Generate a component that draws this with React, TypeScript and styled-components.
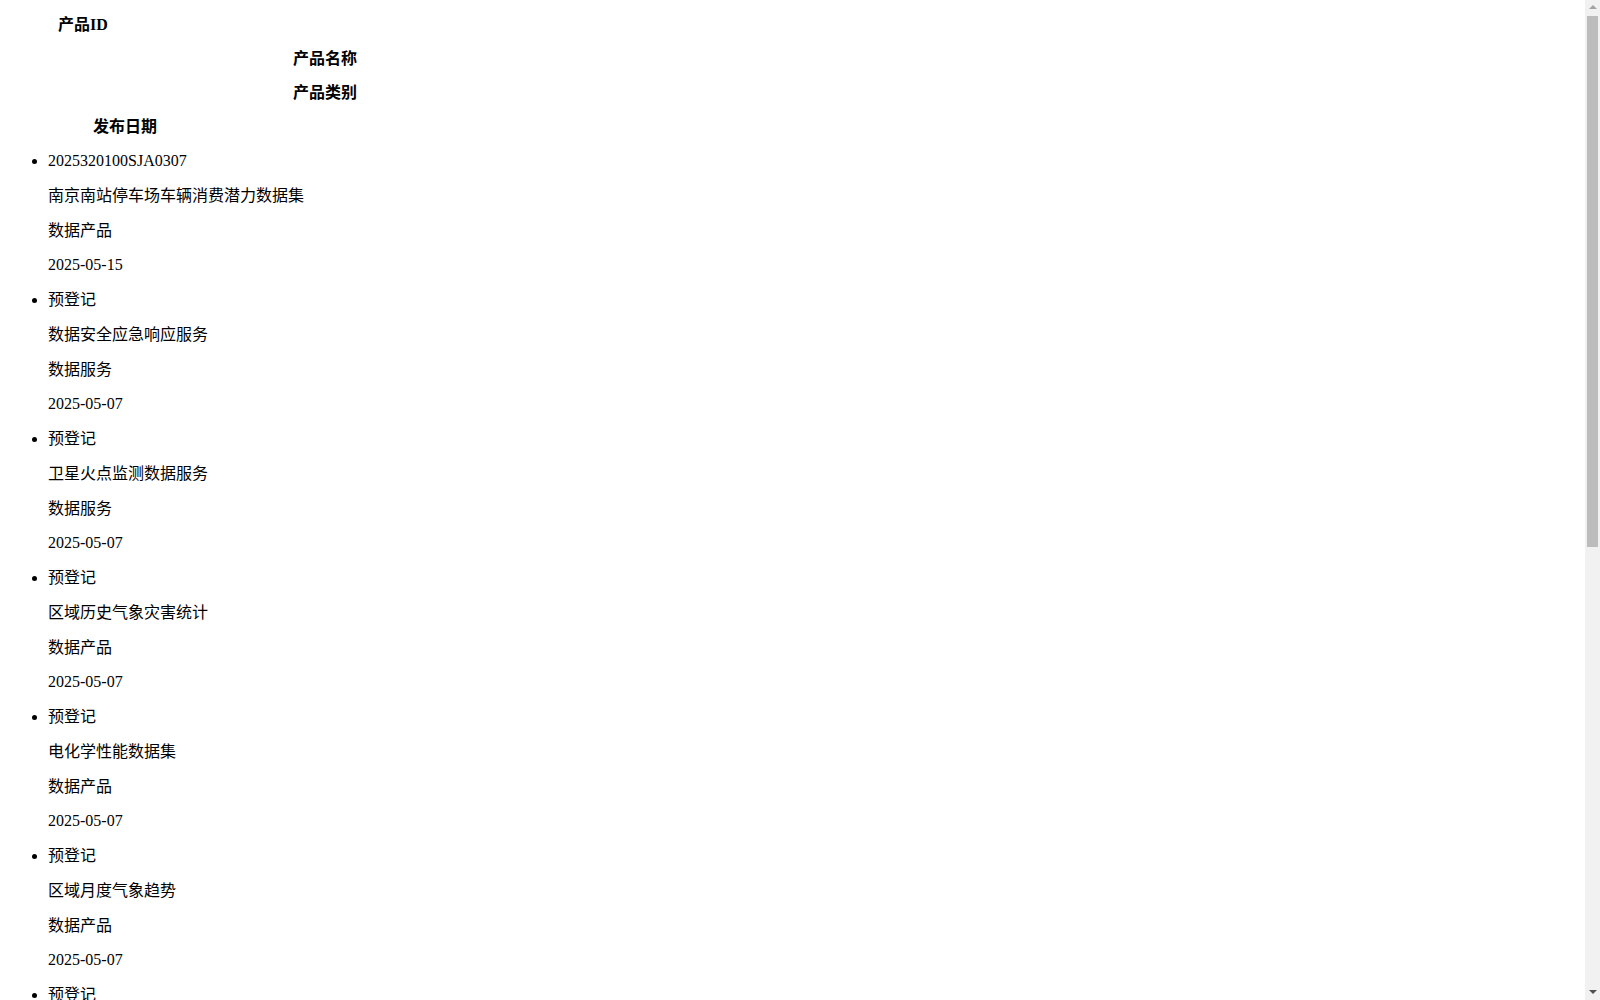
import React from "react";
import styled, { createGlobalStyle } from "styled-components";

const Global = createGlobalStyle`
  html {
    background: #fff;
  }
  body {
    margin: 0;
    padding: 0 23px 8px 8px;
    font-family: "Liberation Serif", "Noto Sans CJK SC", serif;
    font-size: 16px;
    color: #000;
  }
`;

const Header = styled.div`
  display: flow-root;
  padding-top: 16px;
`;

const HeaderCell = styled.div<{ $width: number }>`
  width: ${(p) => p.$width}px;
  margin: 16px 0;
  line-height: 18px;
  font-weight: bold;
  text-align: center;

  &:first-child {
    margin-top: 0;
  }
  &:last-child {
    margin-bottom: 0;
  }
`;

const List = styled.ul`
  margin: 16px 0;
  padding-left: 40px;
  list-style: disc;
`;

const Item = styled.li`
  line-height: 18.75px;
`;

const Line = styled.p`
  margin: 16px 0;
  line-height: 18.75px;
`;

/* Classic page scrollbar drawn over the right edge of the window */
const ScrollRail = styled.div`
  position: fixed;
  top: 0;
  right: 0;
  bottom: 0;
  width: 15px;
  background: #f1f1f1;
  display: flex;
  flex-direction: column;
`;

const ScrollButton = styled.div<{ $dir: "up" | "down" }>`
  height: 15px;
  flex: none;
  display: flex;
  justify-content: center;
  align-items: ${(p) => (p.$dir === "up" ? "flex-start" : "flex-start")};
  padding-top: 5px;
  box-sizing: border-box;

  &::before {
    content: "";
    width: 0;
    height: 0;
    border-left: 4px solid transparent;
    border-right: 4px solid transparent;
    ${(p) =>
      p.$dir === "up"
        ? "border-bottom: 4px solid #a3a3a3;"
        : "border-top: 4px solid #505050;"}
  }
`;

const ScrollTrack = styled.div`
  flex: 1;
  padding: 1px 2px 0;
`;

const ScrollThumb = styled.div`
  height: 531px;
  background: #bcbcbc;
`;

type Row = { id: string; name: string; kind: string; date: string };

const rows: Row[] = [
  { id: "2025320100SJA0307", name: "南京南站停车场车辆消费潜力数据集", kind: "数据产品", date: "2025-05-15" },
  { id: "预登记", name: "数据安全应急响应服务", kind: "数据服务", date: "2025-05-07" },
  { id: "预登记", name: "卫星火点监测数据服务", kind: "数据服务", date: "2025-05-07" },
  { id: "预登记", name: "区域历史气象灾害统计", kind: "数据产品", date: "2025-05-07" },
  { id: "预登记", name: "电化学性能数据集", kind: "数据产品", date: "2025-05-07" },
  { id: "预登记", name: "区域月度气象趋势", kind: "数据产品", date: "2025-05-07" },
  { id: "预登记", name: "城市道路交通流量数据集", kind: "数据产品", date: "2025-05-06" },
  { id: "预登记", name: "企业用电行为分析服务", kind: "数据服务", date: "2025-05-06" },
  { id: "预登记", name: "农作物长势遥感监测", kind: "数据服务", date: "2025-05-06" },
  { id: "预登记", name: "公共交通客流统计数据集", kind: "数据产品", date: "2025-04-30" },
  { id: "预登记", name: "商圈人流热力分析服务", kind: "数据服务", date: "2025-04-30" },
  { id: "预登记", name: "水质在线监测数据集", kind: "数据产品", date: "2025-04-28" },
];

export default function App() {
  return (
    <>
      <Global />
      <Header>
        <HeaderCell $width={150}>产品ID</HeaderCell>
        <HeaderCell $width={634}>产品名称</HeaderCell>
        <HeaderCell $width={634}>产品类别</HeaderCell>
        <HeaderCell $width={234}>发布日期</HeaderCell>
      </Header>
      <List>
        {rows.map((r, i) => (
          <Item key={i}>
            <Line>{r.id}</Line>
            <Line>{r.name}</Line>
            <Line>{r.kind}</Line>
            <Line>{r.date}</Line>
          </Item>
        ))}
      </List>
      <ScrollRail aria-hidden="true">
        <ScrollButton $dir="up" />
        <ScrollTrack>
          <ScrollThumb />
        </ScrollTrack>
        <ScrollButton $dir="down" />
      </ScrollRail>
    </>
  );
}
